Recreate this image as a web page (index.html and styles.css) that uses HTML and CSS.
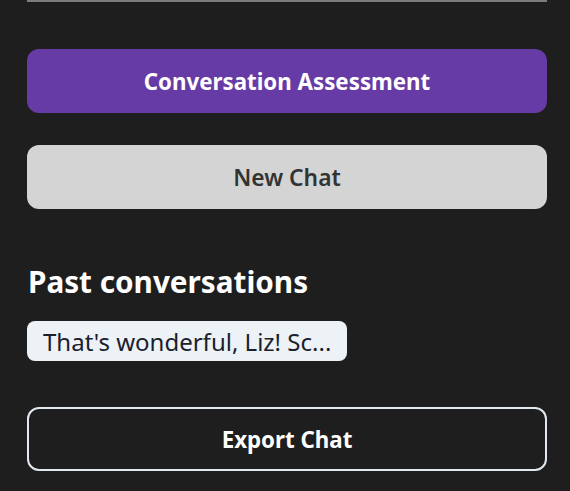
FILE: index.html
```html
<!DOCTYPE html>
<html lang="en">
<head>
    <meta charset="UTF-8">
    <link rel="stylesheet" href="styles.css">
</head>
<body>

<div class="sidebar">
    <div class="prompt-box"></div>

    <button class="btn btn-assess">Conversation Assessment</button>
    <button class="btn btn-new">New Chat</button>

    <h2 class="past-title">Past conversations</h2>
    <div class="past-list">
        <button class="past-item">That's wonderful, Liz! Sc...</button>
    </div>

    <button class="btn btn-export">Export Chat</button>
</div>

</body>
</html>
```

FILE: styles.css
```css
body {
    margin: 0;
    background: #1e1e1e;
    font-family: "Noto Sans", "Open Sans", sans-serif;
}
.sidebar {
    display: flex;
    flex-direction: column;
    padding: 0 23px 0 27px;
}
.prompt-box {
    height: 0;
    border-bottom: 2px solid #7c7c7c;
    margin-bottom: 47px;
}
.btn {
    height: 64px;
    border: none;
    border-radius: 12px;
    font-family: inherit;
    font-size: 22.3px;
    font-weight: 700;
    cursor: pointer;
}
.btn-assess {
    background: #673ba5;
    color: #ffffff;
}
.btn-new {
    margin-top: 32px;
    background: #d4d4d4;
    color: #333333;
    font-size: 22.8px;
    font-weight: 600;
}
.past-title {
    margin: 55px 0 0 1px;
    color: #ffffff;
    font-size: 29.7px;
    font-weight: 700;
    line-height: 36px;
}
.past-list {
    display: flex;
    margin-top: 21px;
}
.past-item {
    height: 40px;
    padding: 0 16px;
    border: none;
    border-radius: 8px;
    background: #edf2f7;
    color: #1a202c;
    font-family: inherit;
    font-size: 24px;
}
.btn-export {
    margin-top: 46px;
    height: 64px;
    background: transparent;
    color: #ffffff;
    border: 2px solid #e2e8f0;
}
```
